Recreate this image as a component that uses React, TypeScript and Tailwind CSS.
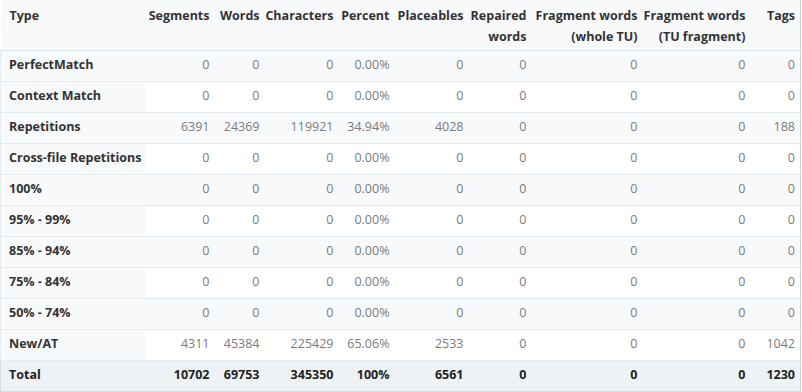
import React from "react";

type Row = { type: string; v: (string | number)[] };

const rows: Row[] = [
  { type: "PerfectMatch", v: [0, 0, 0, "0.00%", 0, 0, 0, 0, 0] },
  { type: "Context Match", v: [0, 0, 0, "0.00%", 0, 0, 0, 0, 0] },
  { type: "Repetitions", v: [6391, 24369, 119921, "34.94%", 4028, 0, 0, 0, 188] },
  { type: "Cross-file Repetitions", v: [0, 0, 0, "0.00%", 0, 0, 0, 0, 0] },
  { type: "100%", v: [0, 0, 0, "0.00%", 0, 0, 0, 0, 0] },
  { type: "95% - 99%", v: [0, 0, 0, "0.00%", 0, 0, 0, 0, 0] },
  { type: "85% - 94%", v: [0, 0, 0, "0.00%", 0, 0, 0, 0, 0] },
  { type: "75% - 84%", v: [0, 0, 0, "0.00%", 0, 0, 0, 0, 0] },
  { type: "50% - 74%", v: [0, 0, 0, "0.00%", 0, 0, 0, 0, 0] },
  { type: "New/AT", v: [4311, 45384, 225429, "65.06%", 2533, 0, 0, 0, 1042] },
];

const total = [10702, 69753, 345350, "100%", 6561, 0, 0, 0, 1230];

const widths = [144, 70, 50, 74, 56, 74, 63, 111, 108, 50];

const headers: React.ReactNode[] = [
  "Segments",
  "Words",
  "Characters",
  "Percent",
  "Placeables",
  <>Repaired<br />words</>,
  <>Fragment words<br />(whole TU)</>,
  <>Fragment words<br />(TU fragment)</>,
  "Tags",
];

export default function App() {
  return (
    <div className="w-[802px] h-[392px] bg-white overflow-hidden" style={{ fontFamily: '"Open Sans", "Noto Sans", sans-serif' }}>
      <table className="w-[801px] border-collapse table-fixed text-[12.5px] border-r border-r-[#c9d3db]">
        <colgroup>
          {widths.map((w, i) => (
            <col key={i} style={{ width: w }} />
          ))}
        </colgroup>
        <thead>
          <tr className="bg-[#f8f9fa] border-b border-b-[#dfe7ee]">
            <th className="h-[50px] align-top text-left pl-[9px] pt-[5px] font-bold text-[#333] leading-[21px]">Type</th>
            {headers.map((h, i) => (
              <th key={i} className="align-top text-right pr-[5px] pt-[5px] font-bold text-[#333] leading-[21px] whitespace-nowrap">
                {h}
              </th>
            ))}
          </tr>
        </thead>
        <tbody>
          {rows.map((r, ri) => (
            <tr key={ri} className={`border-b border-b-[#e3eaf0] ${ri % 2 === 0 ? "bg-[#f8f9fa]" : "bg-white"}`}>
              <td className="h-[31px] bg-[#f8f9fa] border-l border-l-[#e3eaf0] pl-[8px] font-bold text-[#333] whitespace-nowrap">{r.type}</td>
              {r.v.map((x, i) => (
                <td key={i} className="text-right pr-[5px] text-[#7b7b7b] whitespace-nowrap">{x}</td>
              ))}
            </tr>
          ))}
          <tr className="bg-[#eef2f5] border-t border-t-[#c5d0d8] border-b border-b-[#d6dee4]">
            <td className="h-[31px] border-l border-l-[#d6dee4] pl-[8px] font-bold text-[#222]">Total</td>
            {total.map((x, i) => (
              <td key={i} className="text-right pr-[5px] font-bold text-[#222] whitespace-nowrap">{x}</td>
            ))}
          </tr>
        </tbody>
      </table>
    </div>
  );
}
